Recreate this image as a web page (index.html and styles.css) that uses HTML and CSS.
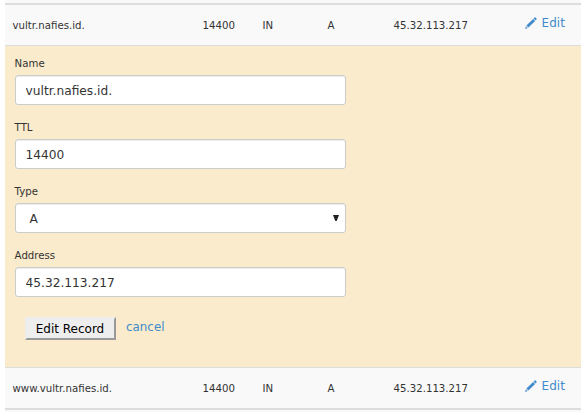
FILE: index.html
```html
<!DOCTYPE html>
<html lang="en">
<head>
<meta charset="utf-8">
<title>Zone records</title>
<link rel="stylesheet" href="styles.css">
</head>
<body>
<main class="records">
  <div class="record">
    <span>vultr.nafies.id.</span><span>14400</span><span>IN</span><span>A</span><span>45.32.113.217</span>
    <a class="edit"><svg class="pencil" viewBox="0 0 12 12"><path d="M1.4 8.6 8.1 1.9l2 2-6.7 6.7zM8.6 1.4l.9-.9q.5-.4 1 0l1 1q.4.5 0 1l-.9.9zM1 9.3l1.7 1.7L0 12z"/></svg>Edit</a>
  </div>
  <form class="editor">
    <label class="field">Name<input type="text" value="vultr.nafies.id."></label>
    <label class="field">TTL<input type="text" value="14400"></label>
    <div class="field">Type<div class="select"><span>A</span><svg class="arrow" viewBox="0 0 6 6"><path d="M0 0h6L3.7 6H2.3z"/></svg></div></div>
    <label class="field">Address<input type="text" value="45.32.113.217"></label>
    <div class="actions"><button type="button">Edit Record</button><a class="cancel">cancel</a></div>
  </form>
  <div class="record last">
    <span>www.vultr.nafies.id.</span><span>14400</span><span>IN</span><span>A</span><span>45.32.113.217</span>
    <a class="edit"><svg class="pencil" viewBox="0 0 12 12"><path d="M1.4 8.6 8.1 1.9l2 2-6.7 6.7zM8.6 1.4l.9-.9q.5-.4 1 0l1 1q.4.5 0 1l-.9.9zM1 9.3l1.7 1.7L0 12z"/></svg>Edit</a>
  </div>
</main>
</body>
</html>
```
FILE: styles.css
```css
* { box-sizing: border-box; }
body {
  margin: 0;
  background: #fff;
  color: #333;
  font: 10.2px/16px "DejaVu Sans", sans-serif;
}
.records {
  height: 412px;
  margin-left: 5px;
  padding-top: 3px;
  background: #f9f9f9;
}
.record {
  display: grid;
  grid-template-columns: 190px 60px 65px 66px 132px 1fr;
  height: 42px;
  padding: 13px 0 0 7.5px;
  border-top: 2px solid #ddd;
}
.record.last {
  border-top: 0;
  border-bottom: 2px solid #ddd;
}
a { color: #428bca; font-size: 12px; }
.edit {
  display: flex;
  align-items: center;
  gap: 4.6px;
  height: 16px;
  margin-top: -3px;
}
.pencil { width: 12px; height: 12px; margin: -1px 0 0 -.5px; fill: #428bca; }
.editor {
  height: 323px;
  padding: 10px 0 0 9.6px;
  background: #faebcc;
  border-top: 1px solid #ddd;
  border-bottom: 1px solid #ddd;
}
.field {
  display: block;
  width: 331px;
  height: 64px;
}
.field input, .select {
  display: flex;
  align-items: center;
  width: 331px;
  height: 30px;
  margin-top: 3px;
  padding: 1px 10px 0;
  background: #fff;
  border: 1px solid #ccc;
  border-radius: 3px;
  box-shadow: inset 0 1px 1px rgba(0, 0, 0, .075);
  color: #333;
  font: 12.2px "DejaVu Sans", sans-serif;
}
.select {
  justify-content: space-between;
  padding: 1px 6px 0 14px;
}
.arrow { width: 6px; height: 6px; margin-top: -2px; fill: #222; }
.actions {
  display: flex;
  gap: 10px;
  padding: 5px 0 0 10.4px;
}
.cancel { padding-top: 2px; font-size: 11.9px; }
button {
  width: 91px;
  height: 23px;
  padding: 0 1px 0 0;
  background: #eee;
  border: 2px solid;
  border-color: #eee #999 #999 #eee;
  color: #000;
  font: 12px "DejaVu Sans", sans-serif;
}
```
